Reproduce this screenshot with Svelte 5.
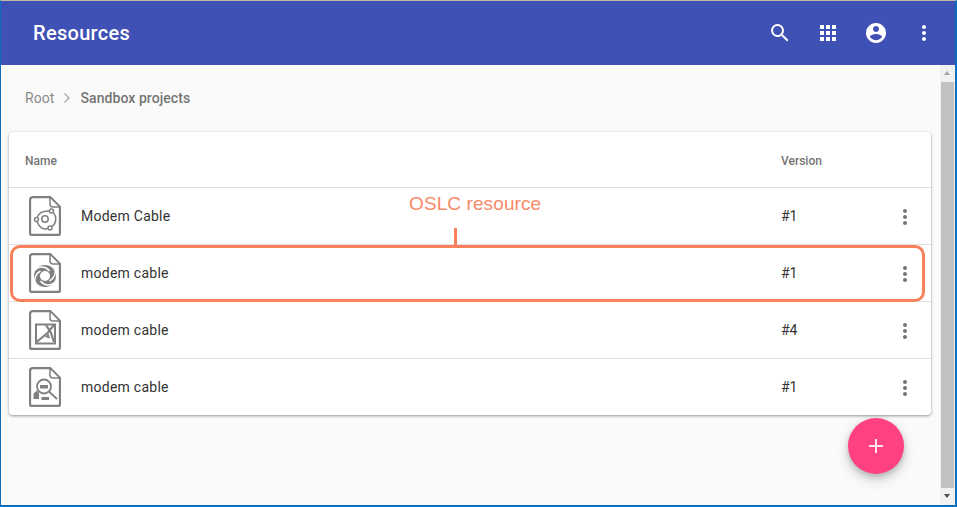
<script>
  const rows = [
    { name: 'Modem Cable', version: '#1', kind: 'a' },
    { name: 'modem cable', version: '#1', kind: 'b' },
    { name: 'modem cable', version: '#4', kind: 'c' },
    { name: 'modem cable', version: '#1', kind: 'd' }
  ];
</script>

<div class="window">
  <header class="appbar">
    <h1>Resources</h1>
    <div class="actions">
      <svg viewBox="0 0 24 24" class="ic"><path d="M15.5 14h-.79l-.28-.27A6.47 6.47 0 0 0 16 9.5 6.5 6.5 0 1 0 9.5 16c1.61 0 3.09-.59 4.23-1.57l.27.28v.79l5 4.99L20.49 19l-4.99-5zm-6 0C7.01 14 5 11.99 5 9.5S7.01 5 9.5 5 14 7.01 14 9.5 11.99 14 9.5 14z"/></svg>
      <svg viewBox="0 0 24 24" class="ic"><path d="M4 8h4V4H4v4zm6 12h4v-4h-4v4zm-6 0h4v-4H4v4zm0-6h4v-4H4v4zm6 0h4v-4h-4v4zm6-10v4h4V4h-4zm-6 4h4V4h-4v4zm6 6h4v-4h-4v4zm0 6h4v-4h-4v4z"/></svg>
      <svg viewBox="0 0 24 24" class="ic"><path d="M12 2C6.48 2 2 6.48 2 12s4.48 10 10 10 10-4.48 10-10S17.52 2 12 2zm0 3c1.66 0 3 1.34 3 3s-1.34 3-3 3-3-1.34-3-3 1.34-3 3-3zm0 14.2c-2.5 0-4.71-1.28-6-3.22.03-1.99 4-3.08 6-3.08 1.99 0 5.97 1.09 6 3.08-1.29 1.94-3.5 3.22-6 3.22z"/></svg>
      <svg viewBox="0 0 24 24" class="ic"><path d="M12 8c1.1 0 2-.9 2-2s-.9-2-2-2-2 .9-2 2 .9 2 2 2zm0 2c-1.1 0-2 .9-2 2s.9 2 2 2 2-.9 2-2-.9-2-2-2zm0 6c-1.1 0-2 .9-2 2s.9 2 2 2 2-.9 2-2-.9-2-2-2z"/></svg>
    </div>
  </header>

  <div class="body">
    <main class="content">
      <nav class="crumbs">
        <span class="root">Root</span>
        <svg viewBox="0 0 8 12" class="chev"><path d="M1.5 1.5 6 6l-4.500 4.500" /></svg>
        <span class="current">Sandbox projects</span>
      </nav>

      <section class="card">
        <div class="row head">
          <span class="name">Name</span>
          <span class="ver">Version</span>
        </div>
        {#each rows as r}
          <div class="row item">
            <svg viewBox="0 0 32 40" class="file">
              <path class="outline" d="M21 1H4a3 3 0 0 0-3 3v33a2 2 0 0 0 2 2h26a2 2 0 0 0 2-2V11z" />
              <path class="fold" d="M21 1v7a3 3 0 0 0 3 3h7z" />
              {#if r.kind === 'a'}
                <g class="thin">
                  <circle cx="16" cy="23" r="3.200" />
                  <circle cx="7.500" cy="23.500" r="2" />
                  <circle cx="22.500" cy="15" r="2" />
                  <circle cx="21" cy="32" r="2" />
                  <path d="M8 21.500C10 16.500 14.500 14.500 20.500 15M24.500 17c3 3 3.500 9.500-1.500 13.500M19 32.500C14.500 34 10 31.500 8 25.500" />
                </g>
              {:else if r.kind === 'b'}
                <g>
                  <circle class="ring" cx="16" cy="23" r="8" />
                  <path class="cuts" d="M20.500 18C17 13.500 11 12.500 6.500 16.500M20.500 28C25.500 25.500 27.500 19.500 25.500 15M11.500 28C15 32.500 21 33.500 25.500 29.500M11.500 18C6.500 20.500 4.500 26.500 6.500 31" />
                </g>
              {:else if r.kind === 'c'}
                <g class="box">
                  <path d="M7 14.500h19v19H7z" />
                  <path class="diag" d="M25 15 18.500 23 7.500 32M17 15l5 8 3 9" />
                  <path class="fillit" d="M16 27 19.500 23.500l1.500 5z" />
                </g>
              {:else}
                <g class="thin heavy">
                  <circle cx="15" cy="19.500" r="7" />
                  <path d="m20 24.500 8 7.500" />
                  <path class="fillit" d="M11 18h8v3.500h-8zM4.500 26.500 8 23.500l2 2.500v6H4.500zM12.500 30H20v3h-7.500z" />
                </g>
              {/if}
            </svg>
            <span class="name">{r.name}</span>
            <span class="ver">{r.version}</span>
            <svg viewBox="0 0 24 24" class="more"><path d="M12 8c1.100 0 2-.9 2-2s-.9-2-2-2-2 .9-2 2 .9 2 2 2zm0 2c-1.100 0-2 .9-2 2s.9 2 2 2 2-.9 2-2-.9-2-2-2zm0 6c-1.100 0-2 .9-2 2s.9 2 2 2 2-.9 2-2-.9-2-2-2z"/></svg>
          </div>
        {/each}
      </section>

      <button class="fab" aria-label="Add">
        <svg viewBox="0 0 16 16"><path d="M7 1h2v6h6v2H9v6H7V9H1V7h6z" /></svg>
      </button>
    </main>

    <aside class="scrollbar">
      <span class="arrow up"></span>
      <span class="track"><span class="thumb"></span></span>
      <span class="arrow down"></span>
    </aside>
  </div>

  <div class="callout-text">OSLC resource</div>
  <div class="callout-tick"></div>
  <div class="callout-box"></div>
</div>

<style>
  :global(body) {
    margin: 0;
    background: #fafafa;
  }
  .window {
    position: relative;
    width: 957px;
    height: 507px;
    box-sizing: border-box;
    display: flex;
    flex-direction: column;
    overflow: hidden;
    border-left: 1px solid #0b6fbd;
    border-right: 2px solid #0b6fbd;
    border-bottom: 2px solid #0b6fbd;
    border-top: 1px solid #c4b9a8;
    font-family: Roboto, "Liberation Sans", sans-serif;
  }
  .appbar {
    flex: none;
    height: 64px;
    background: #3f51b5;
    display: flex;
    align-items: center;
    justify-content: space-between;
    padding: 0 19px 0 32px;
    color: #fff;
  }
  h1 {
    margin: 0;
    font-size: 20px;
    font-weight: 500;
    line-height: 1;
    letter-spacing: 0.3px;
  }
  .actions {
    display: flex;
    gap: 24px;
    align-items: center;
  }
  .ic {
    width: 24px;
    height: 24px;
    fill: #fff;
    display: block;
  }
  .body {
    flex: 1;
    display: flex;
    min-height: 0;
  }
  .content {
    flex: 1;
    position: relative;
    background: #fafafa;
    padding: 0 8px;
    min-width: 0;
  }
  .crumbs {
    height: 65px;
    padding: 0 0 2px 16px;
    display: flex;
    align-items: center;
    font-size: 14px;
    color: #757575;
    letter-spacing: 0.07px;
  }
  .root {
    color: #8a8a8a;
  }
  .chev {
    width: 8px;
    height: 12px;
    margin: 0 9px 0 9px;
    fill: none;
    stroke: #a8a8a8;
    stroke-width: 1.300;
  }
  .current {
    font-weight: 500;
    color: #757575;
  }
  .card {
    width: 922px;
    background: #fff;
    border-radius: 4px;
    box-shadow: 0 1px 3px rgba(0, 0, 0, 0.4);
  }
  .row {
    display: flex;
    align-items: center;
    padding-left: 16px;
    box-sizing: border-box;
  }
  .head {
    height: 55px;
    padding-top: 3px;
    font-size: 12px;
    font-weight: 500;
    color: #757575;
  }
  .head .name {
    flex: none;
    width: 756px;
  }
  .item {
    height: 57px;
    border-top: 1px solid #e0e0e0;
    font-size: 14px;
    color: #333;
    padding-left: 20px;
  }
  .item .name {
    flex: none;
    width: 700px;
    letter-spacing: 0.25px;
  }
  .item .ver {
    flex: none;
    width: 112px;
  }
  .file {
    flex: none;
    width: 32px;
    height: 40px;
    margin-right: 20px;
    fill: none;
    stroke: #808080;
    stroke-width: 2.300;
  }
  .outline {
    stroke-linejoin: round;
    fill: #fff;
  }
  .fold {
    stroke-width: 1.500;
    stroke-linejoin: round;
    fill: #fff;
  }
  .thin {
    stroke-width: 1.500;
  }
  .heavy {
    stroke-width: 1.800;
  }
  .fillit {
    fill: #808080;
    stroke: none;
  }
  .ring {
    stroke-width: 6;
  }
  .cuts {
    stroke: #fff;
    stroke-width: 1.500;
  }
  .box {
    stroke-width: 2;
  }
  .diag {
    stroke-width: 2.200;
  }
  .more {
    flex: none;
    width: 24px;
    height: 24px;
    margin-top: 2px;
    fill: #757575;
  }
  .fab {
    position: absolute;
    left: 847px;
    top: 353px;
    width: 56px;
    height: 56px;
    padding: 0;
    border: 0;
    border-radius: 50%;
    background: #ff4081;
    box-shadow: 0 3px 6px rgba(0, 0, 0, 0.2), 0 6px 14px rgba(0, 0, 0, 0.14);
    display: flex;
    align-items: center;
    justify-content: center;
  }
  .fab svg {
    width: 16px;
    height: 16px;
    fill: #fde3ec;
  }
  .scrollbar {
    flex: none;
    width: 15px;
    background: #f1f1f1;
    display: flex;
    flex-direction: column;
    align-items: center;
  }
  .track {
    flex: 1;
    width: 100%;
    display: flex;
    justify-content: center;
  }
  .thumb {
    width: 13px;
    height: 100%;
    background: #c1c1c1;
  }
  .arrow {
    flex: none;
    height: 17px;
    width: 15px;
    position: relative;
  }
  .arrow::after {
    content: "";
    position: absolute;
    left: 4px;
    border-left: 3.500px solid transparent;
    border-right: 3.500px solid transparent;
  }
  .arrow.up::after {
    top: 6px;
    border-bottom: 4px solid #a3a3a3;
  }
  .arrow.down::after {
    top: 6px;
    border-top: 4px solid #505050;
  }
  .callout-text {
    position: absolute;
    left: 408px;
    top: 192px;
    font-family: "Liberation Sans", Arial, sans-serif;
    font-size: 19px;
    letter-spacing: 0.1px;
    line-height: 22px;
    color: #f98a67;
    white-space: nowrap;
  }
  .callout-tick {
    position: absolute;
    left: 453px;
    top: 227px;
    width: 3px;
    height: 18px;
    background: #f9805a;
  }
  .callout-box {
    position: absolute;
    left: 9px;
    top: 244px;
    width: 915px;
    height: 57px;
    box-sizing: border-box;
    border: 3px solid #f9805a;
    border-radius: 10px;
  }
</style>
